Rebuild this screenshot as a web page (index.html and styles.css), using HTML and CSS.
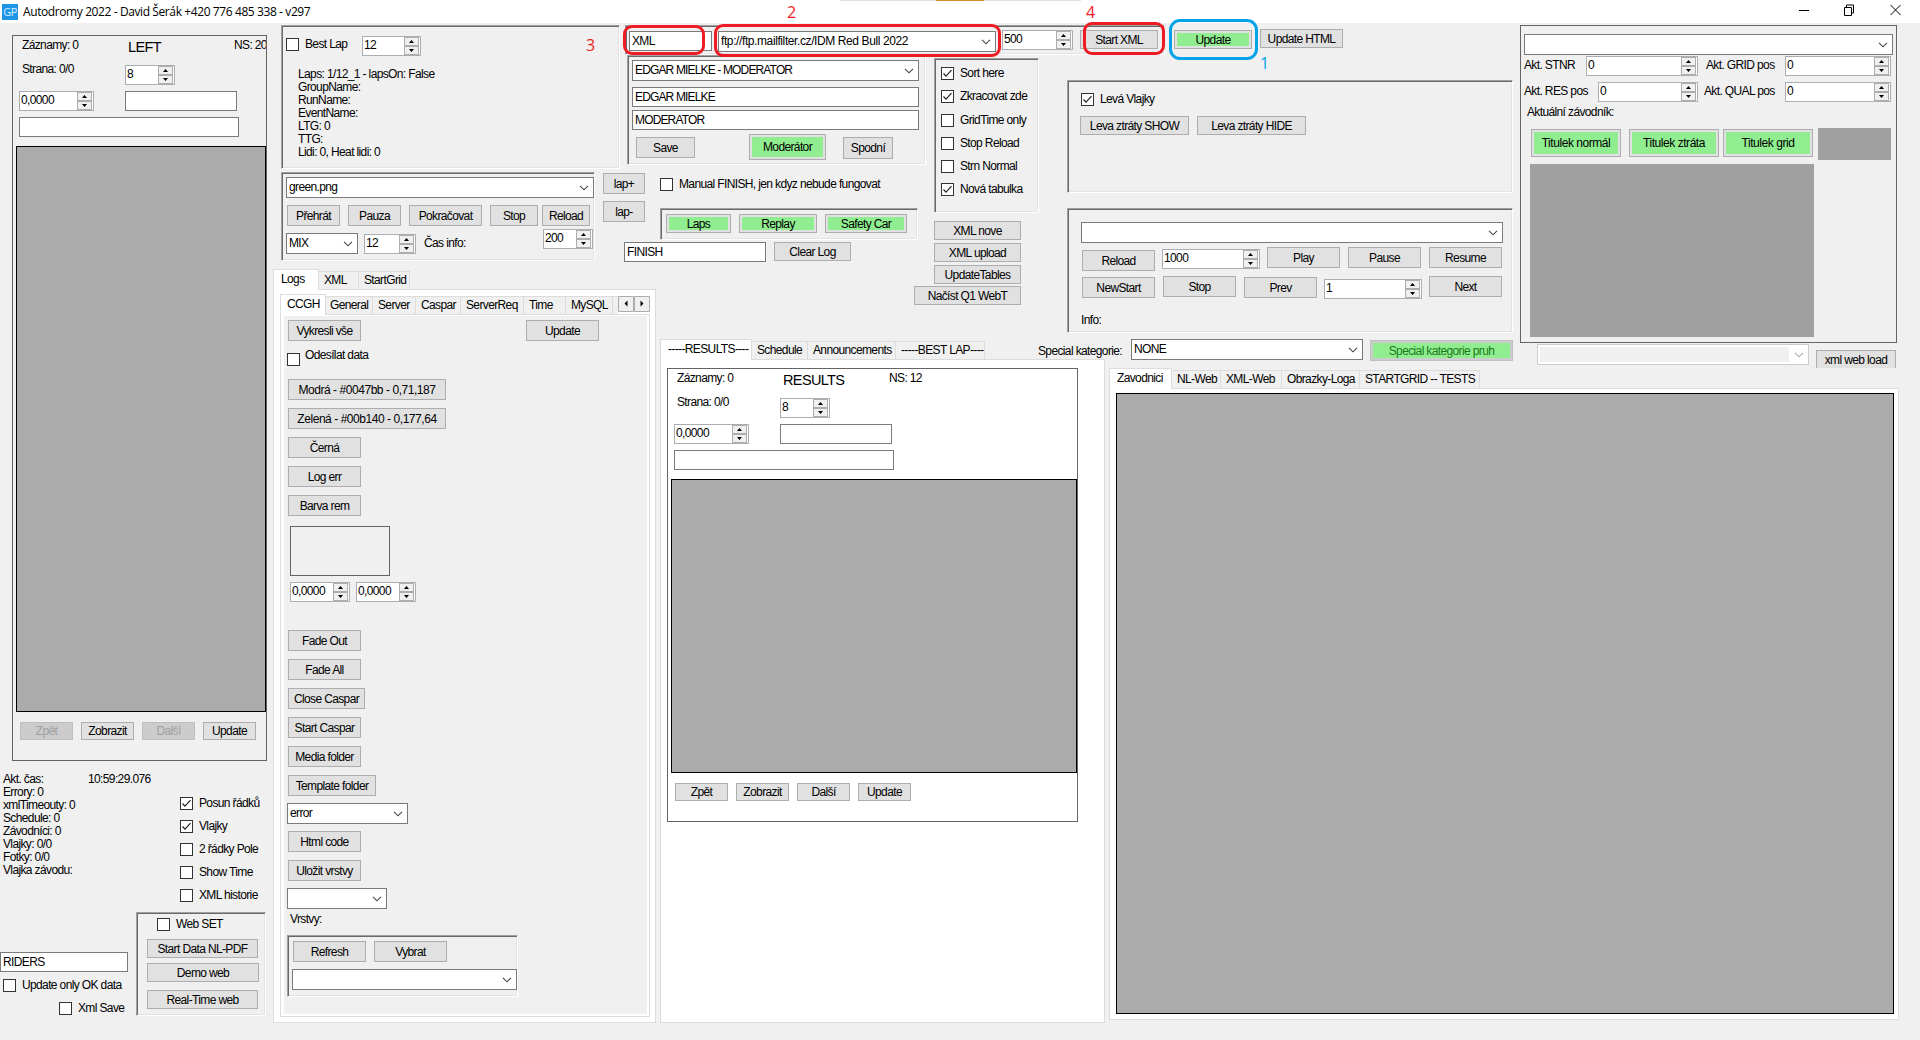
FILE: index.html
```html
<!DOCTYPE html>
<html lang="cs">
<head>
    <meta charset="UTF-8">
    <title>Autodromy 2022</title>
    <link rel="stylesheet" href="styles.css">
</head>
<body>
    <svg class="defs">
        <symbol id="updown" viewBox="0 0 15 18">
            <rect x="0.5" y="0.5" width="14" height="8" fill="#f0f0f0" stroke="#adadad"/>
            <rect x="0.5" y="9.5" width="14" height="8" fill="#f0f0f0" stroke="#adadad"/>
            <path d="M5 6h5L7.5 3zM5 12h5L7.5 15z" fill="#000"/>
        </symbol>
        <symbol id="chev" viewBox="0 0 10 6">
            <path d="M1 0.8L5 4.8L9 0.8" fill="none" stroke="currentColor" stroke-width="1.1"/>
        </symbol>
        <symbol id="tick" viewBox="0 0 11 11">
            <path d="M1.5 5.5L4 8.2L9.5 2.2" fill="none" stroke="#222" stroke-width="1.2"/>
        </symbol>
    </svg>

    <div class="titlebar">
        <span class="app-icon">GP</span>
        <span class="app-title">Autodromy 2022 - David Šerák +420 776 485 338 - v297</span>
        <svg class="win-buttons" width="110" height="14" viewBox="0 0 110 14">
            <path d="M1 7.5h10M46.5 4.5h7v8h-7zM48.5 4v-2h7v8h-2M92.500 2l10 10M102.500 2l-10 10" fill="none" stroke="#000"/>
        </svg>
        <div class="top-strip"><div></div></div>
    </div>

    <div class="workspace">

        <!-- left column -->
        <div class="left">
            <div class="list-panel list-left">
                <div class="list-head"><span>Záznamy: 0</span><span class="big">LEFT</span><span>NS: 20</span></div>
                <div class="list-page"><span>Strana: 0/0</span><div class="spin">8<svg><use href="#updown"/></svg></div></div>
                <div class="list-filter"><div class="spin">0,0000<svg><use href="#updown"/></svg></div><div class="field"></div></div>
                <div class="field list-search"></div>
                <div class="table"></div>
                <div class="list-buttons">
                    <button class="off">Zpět</button><button>Zobrazit</button><button class="off">Další</button><button>Update</button>
                </div>
            </div>
            <div class="status">
                <div class="lines">
                    <p><span class="key">Akt. čas:</span>10:59:29.076</p>
                    <p>Errory: 0</p>
                    <p>xmlTimeouty: 0</p>
                    <p>Schedule: 0</p>
                    <p>Závodníci: 0</p>
                    <p>Vlajky: 0/0</p>
                    <p>Fotky: 0/0</p>
                    <p>Vlajka závodu:</p>
                </div>
                <div class="checks">
                    <label class="check"><i><svg><use href="#tick"/></svg></i>Posun řádků</label>
                    <label class="check"><i><svg><use href="#tick"/></svg></i>Vlajky</label>
                    <label class="check"><i></i>2 řádky Pole</label>
                    <label class="check"><i></i>Show Time</label>
                    <label class="check"><i></i>XML historie</label>
                </div>
            </div>
            <div class="left-bottom">
                <div class="riders">
                    <div class="field">RIDERS</div>
                    <label class="check ok-data"><i></i>Update only OK data</label>
                    <label class="check xml-save"><i></i>Xml Save</label>
                </div>
                <div class="sunken webset">
                    <label class="check"><i></i>Web SET</label>
                    <button>Start Data NL-PDF</button>
                    <button class="demo">Demo web</button>
                    <button class="real">Real-Time web</button>
                </div>
            </div>
        </div>

        <!-- laps info -->
        <div class="sunken laps">
            <div class="laps-top">
                <label class="check"><i></i>Best Lap</label>
                <div class="spin">12<svg><use href="#updown"/></svg></div>
            </div>
            <div class="lines">
                <p>Laps: 1/12_1 - lapsOn: False</p>
                <p>GroupName:</p>
                <p>RunName:</p>
                <p>EventName:</p>
                <p>LTG: 0</p>
                <p>TTG:</p>
                <p>Lidi: 0, Heat lidi: 0</p>
            </div>
        </div>

        <!-- xml source bar -->
        <div class="xmlbar">
            <div class="sunken source">
                <div class="field">XML</div>
                <div class="combo url"><span>ftp://ftp.mailfilter.cz/IDM Red Bull 2022</span><svg><use href="#chev"/></svg></div>
                <div class="spin">500<svg><use href="#updown"/></svg></div>
                <button>Start XML</button>
            </div>
            <button class="green upd">Update</button>
            <button class="upd-html">Update HTML</button>
        </div>

        <div class="sunken moderator">
            <div class="combo">EDGAR MIELKE - MODERATOR<svg><use href="#chev"/></svg></div>
            <div class="field name">EDGAR MIELKE</div>
            <div class="field role">MODERATOR</div>
            <div class="mod-buttons">
                <button class="save">Save</button>
                <button class="green mod">Moderátor</button>
                <button class="lower">Spodní</button>
            </div>
        </div>

        <!-- playout -->
        <div class="playout">
            <div class="sunken playout-panel">
                <div class="combo">green.png<svg><use href="#chev"/></svg></div>
                <div class="playout-buttons">
                    <button>Přehrát</button><button>Pauza</button><button>Pokračovat</button><button class="stop">Stop</button><button>Reload</button>
                </div>
                <div class="mix">
                    <div class="combo">MIX<svg><use href="#chev"/></svg></div>
                    <div class="spin frames">12<svg><use href="#updown"/></svg></div>
                    <span class="time-info">Čas info:</span>
                    <div class="spin delay">200<svg><use href="#updown"/></svg></div>
                </div>
            </div>
            <div class="lap-buttons"><button>lap+</button><button>lap-</button></div>
        </div>

        <div class="finish">
            <label class="check"><i></i>Manual FINISH, jen kdyz nebude fungovat</label>
            <div class="sunken race-buttons">
                <button class="green">Laps</button><button class="green">Replay</button><button class="green">Safety Car</button>
            </div>
            <div class="finish-row"><div class="field">FINISH</div><button>Clear Log</button></div>
        </div>

        <div class="options">
            <div class="sunken option-list">
                <label class="check"><i><svg><use href="#tick"/></svg></i>Sort here</label>
                <label class="check"><i><svg><use href="#tick"/></svg></i>Zkracovat zde</label>
                <label class="check"><i></i>GridTime only</label>
                <label class="check"><i></i>Stop Reload</label>
                <label class="check"><i></i>Strn Normal</label>
                <label class="check"><i><svg><use href="#tick"/></svg></i>Nová tabulka</label>
            </div>
            <div class="xml-buttons">
                <button>XML nove</button>
                <button>XML upload</button>
                <button>UpdateTables</button>
                <button class="q1">Načíst Q1 WebT</button>
            </div>
        </div>

        <div class="control">
            <div class="sunken flags">
                <label class="check"><i><svg><use href="#tick"/></svg></i>Levá Vlajky</label>
                <div class="flag-buttons"><button>Leva ztráty SHOW</button><button>Leva ztráty HIDE</button></div>
            </div>
            <div class="sunken player">
                <div class="combo"><svg><use href="#chev"/></svg></div>
                <div class="player-row">
                    <button class="d3">Reload</button>
                    <div class="spin d2">1000<svg><use href="#updown"/></svg></div>
                    <button>Play</button><button>Pause</button><button>Resume</button>
                </div>
                <div class="player-row second">
                    <button class="d1">NewStart</button><button>Stop</button><button class="d1">Prev</button>
                    <div class="spin d3">1<svg><use href="#updown"/></svg></div>
                    <button>Next</button>
                </div>
                <p>Info:</p>
            </div>
        </div>

        <!-- current rider -->
        <div class="right">
            <div class="rider">
                <div class="combo"><svg><use href="#chev"/></svg></div>
                <div class="pos-row">
                    <span>Akt. STNR</span><div class="spin">0<svg><use href="#updown"/></svg></div>
                    <span>Akt. GRID pos</span><div class="spin">0<svg><use href="#updown"/></svg></div>
                </div>
                <div class="pos-row res">
                    <span>Akt. RES pos</span><div class="spin">0<svg><use href="#updown"/></svg></div>
                    <span>Akt. QUAL pos</span><div class="spin">0<svg><use href="#updown"/></svg></div>
                </div>
                <p>Aktuální závodník:</p>
                <div class="titles">
                    <button class="green">Titulek normál</button><button class="green">Titulek ztráta</button><button class="green grid-title">Titulek grid</button>
                    <div class="thumb"></div>
                </div>
                <div class="preview"></div>
            </div>
            <div class="web-load">
                <div class="combo"><span></span><svg><use href="#chev"/></svg></div>
                <button>xml web load</button>
            </div>
        </div>

        <!-- logs tabs -->
        <div class="logs">
            <div class="tabs logs-tabs"><span class="active">Logs</span><span>XML</span><span>StartGrid</span></div>
            <div class="page logs-page">
                <div class="tabs inner-tabs">
                    <span class="active">CCGH</span><span>General</span><span>Server</span><span>Caspar</span><span>ServerReq</span><span>Time</span><span>MySQL</span><span></span>
                    <svg class="scroller" width="32" height="16" viewBox="0 0 32 16">
                        <path d="M0.500 0.500h15v15h-15zM16.500 0.500h15v15h-15z" fill="#f0f0f0" stroke="#adadad"/>
                        <path d="M9.500 4.500v6L6.500 7.500zM22.500 4.500v6L25.500 7.500z" fill="#000"/>
                    </svg>
                </div>
                <div class="page inner-page">
                    <div class="pane">
                        <div class="pane-top"><button>Vykresli vše</button><button>Update</button></div>
                        <label class="check send"><i></i><span>Odesílat data</span></label>
                        <div class="stack">
                            <button class="wide">Modrá - #0047bb - 0,71,187</button>
                            <button class="wide">Zelená - #00b140 - 0,177,64</button>
                            <button>Černá</button>
                            <button>Log err</button>
                            <button>Barva rem</button>
                        </div>
                        <div class="swatch"></div>
                        <div class="offsets">
                            <div class="spin">0,0000<svg><use href="#updown"/></svg></div>
                            <div class="spin">0,0000<svg><use href="#updown"/></svg></div>
                        </div>
                        <div class="stack caspar">
                            <button>Fade Out</button>
                            <button>Fade All</button>
                            <button class="close-caspar">Close Caspar</button>
                            <button>Start Caspar</button>
                            <button>Media folder</button>
                            <button class="template">Template folder</button>
                        </div>
                        <div class="combo error">error<svg><use href="#chev"/></svg></div>
                        <div class="stack html">
                            <button>Html code</button>
                            <button>Uložit vrstvy</button>
                        </div>
                        <div class="combo layer"><svg><use href="#chev"/></svg></div>
                        <p>Vrstvy:</p>
                        <div class="sunken layers">
                            <div class="layer-buttons"><button>Refresh</button><button>Vybrat</button></div>
                            <div class="combo"><svg><use href="#chev"/></svg></div>
                        </div>
                    </div>
                </div>
            </div>
        </div>

        <!-- results tabs -->
        <div class="results">
            <div class="tabs results-tabs"><span class="active">-----RESULTS----</span><span>Schedule</span><span>Announcements</span><span>-----BEST LAP----</span></div>
            <div class="page results-page">
                <div class="list-panel list-results">
                    <div class="list-head"><span>Záznamy: 0</span><span class="big">RESULTS</span><span>NS: 12</span></div>
                    <div class="list-page"><span>Strana: 0/0</span><div class="spin">8<svg><use href="#updown"/></svg></div></div>
                    <div class="list-filter"><div class="spin">0,0000<svg><use href="#updown"/></svg></div><div class="field"></div></div>
                    <div class="field list-search"></div>
                    <div class="table"></div>
                    <div class="list-buttons">
                        <button>Zpět</button><button>Zobrazit</button><button>Další</button><button>Update</button>
                    </div>
                </div>
            </div>
        </div>

        <div class="category">
            <span>Special kategorie:</span>
            <div class="combo">NONE<svg><use href="#chev"/></svg></div>
            <button class="green off">Special kategorie pruh</button>
        </div>

        <!-- riders tabs -->
        <div class="riders-tabs">
            <div class="tabs web-tabs"><span class="active">Zavodnici</span><span>NL-Web</span><span>XML-Web</span><span>Obrazky-Loga</span><span>STARTGRID -- TESTS</span></div>
            <div class="page riders-page"><div class="table"></div></div>
        </div>
    </div>

    <!-- hand drawn marks over the window -->
    <div class="mark red m3"></div><div class="num n3">3</div>
    <div class="mark red m2"></div><div class="num n2">2</div>
    <div class="mark red m4"></div><div class="num n4">4</div>
    <div class="mark blue m1"></div><div class="num n1">1</div>
</body>
</html>
```
FILE: styles.css
```css
*{
    margin: 0;
    padding: 0;
    box-sizing: border-box;
}
body{
    width: 1920px;
    height: 1040px;
    overflow: hidden;
    position: relative;
    background: #f0f0f0;
    color: #000;
    font: 12px/14px "Liberation Sans", sans-serif;
    letter-spacing: -0.63px;
    white-space: nowrap;
}
.defs{
    position: absolute;
    width: 0;
    height: 0;
}

/* title bar */
.titlebar{
    display: flex;
    align-items: center;
    height: 23px;
    background: #fff;
    position: relative;
}
.app-icon{
    width: 16px;
    height: 16px;
    margin-left: 2px;
    background: #1e96e6;
    color: #d8efff;
    font: 11px/16px "Open Sans", sans-serif;
    letter-spacing: -0.5px;
    text-align: center;
}
.app-title{
    margin-left: 5px;
    font: 12px/20px "Open Sans", sans-serif;
    letter-spacing: -0.4px;
}
.win-buttons{
    margin: -3px 12px 0 auto;
}
.top-strip{
    position: absolute;
    left: 840px;
    top: 0;
    width: 241px;
    height: 1px;
    background: #e0e0e0;
}
.top-strip div{
    width: 48px;
    height: 1px;
    margin-left: 96px;
    background: #cf8d2e;
}

/* controls */
button{
    display: block;
    height: 21px;
    border: 1px solid #adadad;
    background: #e1e1e1;
    color: #000;
    font: inherit;
    letter-spacing: inherit;
    text-align: center;
    white-space: nowrap;
    flex: none;
}
button.green{
    background: #90ee90;
    box-shadow: inset 0 0 0 2px #e1e1e1;
}
button.off{
    background: #ccc;
    border-color: #bfbfbf;
    color: #a0a0a0;
}
button.green.off{
    background: #90ee90;
    box-shadow: inset 0 0 0 2px #ccc;
    color: #1a7a1a;
}
.field, .combo, .spin{
    background: #fff;
    border: 1px solid #7a7a7a;
    height: 20px;
    padding-left: 2px;
    line-height: 18px;
    flex: none;
}
.combo{
    display: flex;
    align-items: center;
    height: 21px;
    padding: 0 4px 1px 2px;
}
.combo svg{
    width: 10px;
    height: 6px;
    margin-left: auto;
    margin-top: 1px;
    color: #444;
    flex: none;
}
.spin{
    display: flex;
    border-color: #abadb3;
    padding-left: 1px;
    line-height: 16px;
}
.spin svg{
    width: 15px;
    height: 18px;
    margin-left: auto;
    margin-right: 1px;
}
.check{
    display: flex;
    height: 13px;
    line-height: 13px;
}
.check i{
    width: 13px;
    height: 13px;
    margin-right: 6px;
    background: #fff;
    border: 1px solid #333;
    flex: none;
}
.check svg{
    display: block;
    width: 11px;
    height: 11px;
}
.sunken{
    border: 1px solid;
    border-color: #a0a0a0 #fff #fff #a0a0a0;
    box-shadow: inset 1px 1px #696969, inset -1px -1px #e3e3e3;
    overflow: hidden;
    flex: none;
}
.lines p{
    display: flex;
    line-height: 13px;
}
.table{
    background: #ababab;
    border: 1px solid #000;
}
.tabs{
    display: flex;
    align-items: flex-end;
    height: 20px;
}
.tabs span{
    height: 18px;
    padding-left: 5px;
    line-height: 17px;
    border: 1px solid #dcdcdc;
    border-width: 1px 1px 0 0;
}
.tabs .active{
    height: 21px;
    margin-bottom: -1px;
    padding-left: 7px;
    line-height: 18px;
    background: #fff;
    border-left-width: 1px;
    position: relative;
}
.page{
    background: #fff;
    border: 1px solid #dcdcdc;
}

/* main grid */
.workspace{
    display: grid;
    grid-template-columns: 272px 352px 36px 272px 134px 43px 411px 400px;
    grid-template-rows: 32px 116px 98px 70px 29px 672px;
    align-items: start;
    height: 1017px;
}
.left{ grid-area: 1 / 1 / 7 / 2; }
.laps{ grid-area: 1 / 2 / 3 / 3; }
.xmlbar{ grid-area: 1 / 3 / 2 / 8; }
.moderator{ grid-area: 2 / 3 / 3 / 5; }
.playout{ grid-area: 3 / 2 / 4 / 4; }
.finish{ grid-area: 3 / 3 / 4 / 5; }
.options{ grid-area: 2 / 5 / 5 / 6; }
.control{ grid-area: 2 / 6 / 5 / 8; }
.right{ grid-area: 1 / 8 / 6 / 9; }
.logs{ grid-area: 4 / 2 / 7 / 4; }
.results{ grid-area: 5 / 4 / 7 / 7; }
.category{ grid-area: 5 / 5 / 6 / 8; }
.riders-tabs{ grid-area: 6 / 7 / 7 / 9; }

/* record list, used on the left and in results */
.list-panel{
    border: 1px solid #646464;
    overflow: hidden;
}
.list-head{
    display: grid;
    grid-template-columns: 106px 106px auto;
    height: 20px;
    padding-left: 9px;
    line-height: 19px;
}
.list-head .big{
    font-size: 14.5px;
    line-height: 22px;
}
.list-page{
    display: grid;
    grid-template-columns: 103px 50px;
    margin: 9px 0 0 9px;
}
.list-page span{
    margin-top: -3px;
}
.list-filter{
    display: grid;
    grid-template-columns: 75px 112px;
    gap: 31px;
    margin: 6px 0 0 6px;
}
.list-search{
    width: 220px;
    margin: 6px 0 0 6px;
}
.list-panel .table{
    margin: 9px 0 0 3px;
}
.list-buttons{
    display: grid;
    grid-template-columns: repeat(4, 53px);
    gap: 8px;
    margin: 10px 0 0 7px;
}
.list-buttons button{
    height: 18px;
}
.list-left{
    width: 255px;
    height: 726px;
    margin: 12px 0 0 12px;
}
.list-left .table{
    width: 250px;
    height: 566px;
}
.list-results{
    width: 411px;
    height: 454px;
    margin: 8px 0 0 6px;
}
.list-results .table{
    width: 406px;
    height: 294px;
}

/* left column */
.status{
    display: flex;
    height: 139px;
    margin-top: 12px;
}
.status .lines{
    width: 177px;
    margin-left: 3px;
}
.status .key{
    width: 85px;
}
.checks{
    display: flex;
    flex-direction: column;
    gap: 10px;
    margin-top: 24px;
}
.left-bottom{
    display: flex;
}
.riders{
    width: 136px;
    padding-top: 40px;
}
.riders .field{
    width: 128px;
}
.ok-data{
    margin: 7px 0 0 3px;
}
.xml-save{
    margin: 10px 0 0 59px;
}
.webset{
    width: 130px;
    height: 104px;
    padding: 5px 0 0 10px;
}
.webset .check{
    margin: 0 0 8px 10px;
}
.webset button{
    width: 111px;
    height: 19px;
}
.webset .demo{
    width: 112px;
    margin: 5px 0 8px;
}

/* laps */
.laps{
    width: 339px;
    height: 144px;
    margin: 2px 0 0 9px;
}
.laps-top{
    display: grid;
    grid-template-columns: 76px 59px;
    padding: 10px 0 0 4px;
}
.laps-top .check{
    margin-top: 2px;
}
.laps .lines{
    margin: 12px 0 0 16px;
}

/* xml bar */
.xmlbar{
    display: flex;
}
.source{
    display: flex;
    width: 540px;
    height: 30px;
    margin: 2px 0 0 1px;
    padding: 4px 0 0 3px;
}
.source .field{
    width: 83px;
    margin-top: 1px;
}
.source .combo{
    width: 278px;
    margin: 1px 6px 0;
}
.url{
    letter-spacing: -0.4px;
}
.source .spin{
    width: 71px;
}
.source button{
    width: 78px;
    height: 19px;
    margin-left: 7px;
}
.upd{
    width: 78px;
    height: 19px;
    margin: 7px 8px 0 9px;
}
.upd-html{
    width: 83px;
    height: 19px;
    margin-top: 6px;
}

/* moderator */
.moderator{
    width: 299px;
    height: 110px;
    margin-left: 3px;
    padding: 4px 0 0 4px;
}
.moderator .combo, .moderator .field{
    width: 287px;
    letter-spacing: -0.85px;
}
.moderator .name{
    margin: 6px 0 3px;
}
.mod-buttons{
    display: flex;
    margin: 4px 0 0 4px;
}
.save{
    width: 59px;
    margin-top: 3px;
}
.mod{
    width: 77px;
    height: 26px;
    margin: 0 17px 0 54px;
}
.lower{
    width: 50px;
    height: 22px;
    margin-top: 3px;
}

/* playout */
.playout{
    display: flex;
    margin: 1px 0 0 9px;
}
.playout-panel{
    width: 314px;
    height: 89px;
    padding: 4px 0 0 4px;
}
.playout-panel > .combo{
    width: 308px;
}
.playout-buttons{
    display: grid;
    grid-template-columns: 53px 53px 73px 44px 48px;
    gap: 8px;
    margin: 7px 0 0 1px;
}
.playout-buttons .stop{
    width: 48px;
}
.mix{
    display: flex;
    margin-top: 3px;
}
.mix .combo{
    width: 72px;
    margin-top: 4px;
}
.mix .frames{
    width: 52px;
    margin: 5px 8px 0 6px;
}
.time-info{
    width: 119px;
    margin-top: 7px;
}
.mix .delay{
    width: 50px;
}
.lap-buttons{
    margin: 1px 0 0 8px;
}
.lap-buttons button{
    width: 42px;
    margin-bottom: 7px;
}

/* finish */
.finish > .check{
    margin: 7px 0 0 36px;
}
.race-buttons{
    display: grid;
    grid-template-columns: 65px 78px 82px;
    gap: 8px;
    width: 258px;
    height: 32px;
    margin: 17px 0 2px 36px;
    padding: 5px;
}
.race-buttons button{
    height: 19px;
}
.finish-row{
    display: flex;
    gap: 8px;
}
.finish-row .field{
    width: 142px;
}
.finish-row button{
    width: 77px;
    height: 19px;
}

/* options */
.options{
    margin: 3px 0 0 2px;
}
.option-list{
    display: flex;
    flex-direction: column;
    gap: 10.3px;
    width: 105px;
    height: 155px;
    padding: 8px 0 0 6px;
}
.xml-buttons{
    display: flex;
    flex-direction: column;
    align-items: flex-end;
    gap: 3px;
    width: 87px;
    margin-top: 8px;
}
.xml-buttons button{
    width: 87px;
    height: 19px;
}
.xml-buttons .q1{
    width: 107px;
    margin-top: -1px;
}

/* flags and player */
.control{
    margin: 25px 0 0 1px;
}
.flags{
    width: 446px;
    height: 113px;
    padding: 12px 0 0 12px;
}
.flags .check{
    margin-left: 1px;
}
.flag-buttons{
    display: flex;
    gap: 8px;
    margin-top: 10px;
}
.flag-buttons button{
    width: 109px;
    height: 19px;
}
.player{
    width: 446px;
    height: 125px;
    margin-top: 15px;
    padding: 13px 0 0 13px;
}
.player .combo{
    width: 422px;
}
.player-row{
    display: flex;
    gap: 8px;
    margin: 4px 0 0 1px;
}
.player-row.second{
    margin-top: 5px;
}
.player-row button{
    width: 73px;
}
.player-row .spin{
    width: 98px;
    margin-left: -1px;
    margin-right: -1px;
}
.player-row .d1{ margin-top: 1px; }
.player-row .d2{ margin-top: 2px; }
.player-row .d3{ margin-top: 3px; }
.player p{
    margin-top: 14px;
}

/* right column */
.rider{
    width: 377px;
    height: 318px;
    margin-top: 2px;
    padding: 8px 0 0 3px;
    border: 1px solid #646464;
}
.rider .combo{
    width: 369px;
    margin-bottom: 1px;
}
.pos-row{
    display: grid;
    grid-template-columns: 62px 120px 79px 106px;
}
.pos-row .spin:nth-child(2){
    width: 112px;
}
.pos-row span{
    margin-top: 2px;
}
.pos-row.res{
    grid-template-columns: 74px 106px 81px 106px;
    margin: 6px 0 3px;
}
.pos-row.res .spin:nth-child(2){
    width: 100px;
}
.rider p{
    margin-left: 3px;
}
.titles{
    display: flex;
    margin: 9px 0 4px 7px;
    letter-spacing: -0.45px;
}
.titles button{
    width: 90px;
    height: 28px;
    margin: 1px 8px 0 0;
}
.titles .grid-title{
    margin: 1px 5px 0 -4px;
}
.thumb{
    width: 73px;
    height: 32px;
    background: #a0a0a0;
}
.preview{
    width: 284px;
    height: 173px;
    margin-left: 6px;
    background: #a0a0a0;
}
.web-load{
    display: flex;
    margin-left: 17px;
}
.web-load .combo{
    width: 272px;
    margin-top: 1px;
    border-color: #ccc;
}
.web-load .combo span{
    width: 249px;
    height: 15px;
    background: #f0f0f0;
}
.web-load .combo svg{
    color: #aaa;
}
.web-load button{
    width: 80px;
    height: 18px;
    margin: 7px 0 0 7px;
    border-bottom: 0;
}

/* logs */
.logs{
    margin-left: 1px;
}
.logs-tabs .active{ width: 46px; }
.logs-tabs span:nth-child(2){ width: 40px; }
.logs-tabs span:nth-child(3){ width: 51px; }
.logs-page{
    width: 383px;
    height: 734px;
    padding: 4px 0 0 6px;
}
.inner-tabs .active{ width: 46px; padding-left: 6px; }
.inner-tabs span:nth-child(2){ width: 47px; padding-left: 4px; }
.inner-tabs span:nth-child(3){ width: 43px; }
.inner-tabs span:nth-child(4){ width: 45px; }
.inner-tabs span:nth-child(5){ width: 63px; }
.inner-tabs span:nth-child(6){ width: 42px; }
.inner-tabs span:nth-child(7){ width: 47px; }
.inner-tabs span:nth-child(8){ width: 5px; padding: 0; border-right: 0; }
.inner-tabs span{
    background: #f0f0f0;
}
.inner-tabs .active{
    background: #fff;
}
.scroller{
    margin-bottom: 2px;
}
.inner-page{
    width: 370px;
    height: 703px;
    padding: 1px 0 0 3px;
}
.pane{
    width: 363px;
    height: 698px;
    padding: 4px 0 0 4px;
    background: #f0f0f0;
}
.pane button{
    width: 73px;
}
.pane-top{
    display: flex;
    gap: 165px;
}
.send{
    margin: 12px 0 13px -1px;
}
.send span{
    margin: -4px 0 0 -1px;
}
.stack{
    display: flex;
    flex-direction: column;
    gap: 8px;
}
.pane .wide{
    width: 158px;
    letter-spacing: -0.45px;
}
.pane .close-caspar{ width: 77px; }
.pane .template{ width: 88px; }
.swatch{
    width: 100px;
    height: 50px;
    margin: 10px 0 6px 2px;
    border: 1px solid #646464;
}
.offsets{
    display: flex;
    gap: 6px;
    margin-left: 2px;
}
.offsets .spin{
    width: 60px;
}
.caspar{
    margin-top: 28px;
}
.error{
    width: 121px;
    margin: 7px 0 7px -1px;
}
.layer{
    width: 100px;
    margin: 7px 0 3px -1px;
}
.pane p{
    margin-left: 2px;
}
.layers{
    width: 231px;
    height: 62px;
    margin: 9px 0 0 -1px;
    padding: 5px 0 0 4px;
}
.layer-buttons{
    display: flex;
    gap: 8px;
    margin: 0 0 7px 1px;
}
.layers .combo{
    width: 225px;
}

/* results */
.results-tabs .active{ width: 92px; }
.results-tabs span:nth-child(2){ width: 56px; }
.results-tabs span:nth-child(3){ width: 88px; }
.results-tabs span:nth-child(4){ width: 89px; }
.results-page{
    width: 445px;
    height: 664px;
}

.category{
    display: flex;
    margin-left: 106px;
}
.category span{
    width: 93px;
    line-height: 24px;
}
.category .combo{
    width: 232px;
}
.category button{
    width: 143px;
    margin: 1px 0 0 7px;
}

/* riders table */
.web-tabs .active{ width: 63px; }
.web-tabs span:nth-child(2){ width: 49px; }
.web-tabs span:nth-child(3){ width: 61px; }
.web-tabs span:nth-child(4){ width: 78px; }
.web-tabs span:nth-child(5){ width: 120px; }
.riders-page{
    width: 790px;
    height: 632px;
    padding: 4px 0 0 6px;
}
.riders-page .table{
    width: 778px;
    height: 621px;
}

/* marks */
.mark{
    position: absolute;
    border: 3px solid #ed1c24;
    border-radius: 9px;
}
.blue{
    border-color: #00a2e8;
    border-radius: 11px;
}
.m3{ left: 623px; top: 25px; width: 82px; height: 30px; }
.m2{ left: 714px; top: 24px; width: 287px; height: 33px; }
.m4{ left: 1083px; top: 22px; width: 82px; height: 33px; }
.m1{ left: 1169px; top: 19px; width: 89px; height: 41px; }
.num{
    position: absolute;
    color: #ed1c24;
    font: 16px/20px "Open Sans", sans-serif;
}
.n3{ left: 586px; top: 35px; }
.n2{ left: 787px; top: 2px; }
.n4{ left: 1086px; top: 2px; }
.n1{ left: 1260px; top: 53px; color: #00a2e8; }
```
